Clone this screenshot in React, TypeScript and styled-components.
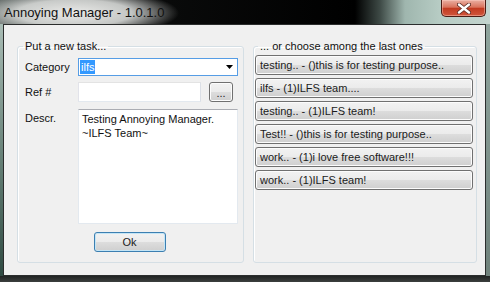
import styled, { createGlobalStyle } from "styled-components";

const GlobalStyle = createGlobalStyle`
  html, body {
    margin: 0;
    padding: 0;
    background: #111;
  }
  body {
    font-family: "Liberation Sans", Arial, sans-serif;
  }
`;

const Screen = styled.div`
  width: 490px;
  height: 282px;
  display: flex;
  flex-direction: column;
  overflow: hidden;
  background: #1c2120;
`;

const TitleBar = styled.div`
  height: 24px;
  flex: none;
  display: flex;
  justify-content: space-between;
  align-items: flex-start;
  background: radial-gradient(
      ellipse 105px 24px at 74px 13px,
      rgba(238, 238, 236, 0.98) 0%,
      rgba(220, 222, 220, 0.88) 55%,
      rgba(120, 124, 122, 0) 100%
    ),
    linear-gradient(
      90deg,
      #4a5350 0,
      #0a0b0b 150px,
      #000 355px,
      #3e4a46 380px,
      #9fb6ae 405px,
      #b7ccc4 440px,
      #c3d4ce 490px
    );
`;

const Title = styled.div`
  padding: 5px 0 0 4px;
  font-size: 13px;
  line-height: 15px;
  color: #111;
`;

const CloseButton = styled.div`
  width: 45px;
  height: 17px;
  margin-right: 4px;
  box-sizing: border-box;
  display: flex;
  align-items: center;
  justify-content: center;
  border: 1px solid #4b1c14;
  border-top: none;
  border-radius: 0 0 5px 5px;
  background: linear-gradient(#eab0a2 0%, #d9735c 45%, #c23b21 52%, #d0563c 100%);
  box-shadow: inset 0 0 0 1px rgba(255, 210, 200, 0.45);
`;

const FrameRow = styled.div`
  height: 252px;
  flex: none;
  display: flex;
`;

const LeftEdge = styled.div`
  width: 3px;
  background: linear-gradient(#a9bcb5, #5f7a70 60%, #2f4a42);
`;

const RightEdge = styled.div`
  width: 4px;
  background: linear-gradient(#8fa49d, #6f817b);
`;

const BottomEdge = styled.div`
  flex: 1;
  background: linear-gradient(#202322, #3b3f3e);
`;

const Client = styled.div`
  flex: 1;
  min-width: 0;
  box-sizing: border-box;
  display: flex;
  gap: 9px;
  padding: 14px 8px 12px 13px;
  background: #f0f0f0;
  border: 1px solid #2b2d2d;
`;

const GroupBox = styled.fieldset<{ $pad: string; $width?: number }>`
  flex: ${({ $width }) => ($width ? "none" : "1 1 0")};
  width: ${({ $width }) => ($width ? `${$width}px` : "auto")};
  box-sizing: border-box;
  min-width: 0;
  margin: 0;
  padding: ${({ $pad }) => $pad};
  border: 1px solid #d5dfe5;
  border-radius: 3px;
  box-shadow: inset 1px 1px 0 #fff;
  display: flex;
  flex-direction: column;
`;

const Caption = styled.legend<{ $indent: number }>`
  margin-left: ${({ $indent }) => $indent}px;
  padding: 0 2px;
  font-size: 11px;
  line-height: 14px;
  color: #111;
`;

const FormGrid = styled.div`
  margin-top: 5px;
  display: grid;
  grid-template-columns: 53px minmax(0, 1fr);
  row-gap: 6px;
`;

const FieldLabel = styled.div<{ $top?: boolean }>`
  font-size: 11px;
  line-height: 14px;
  color: #111;
  align-self: ${({ $top }) => ($top ? "start" : "center")};
  padding-top: ${({ $top }) => ($top ? "3px" : "0")};
`;

const Combo = styled.div`
  height: 18px;
  box-sizing: border-box;
  border: 1px solid #569de5;
  background: #fff;
  display: flex;
  align-items: center;
  justify-content: space-between;
  padding: 0 4px 0 1px;
`;

const Selected = styled.span`
  background: #3399ff;
  color: #fff;
  font-size: 11px;
  line-height: 14px;
  padding: 0 1px;
`;

const RefRow = styled.div`
  display: flex;
  gap: 8px;
  padding-right: 5px;
`;

const TextInput = styled.input`
  flex: 1;
  width: 100%;
  min-width: 0;
  height: 20px;
  box-sizing: border-box;
  margin: 0;
  border: 1px solid #abadb3;
  border-top-color: #e3e3e3;
  border-left-color: #e2e3ea;
  border-right-color: #dbdfe6;
  border-bottom-color: #e3e9ef;
  background: #fff;
`;

const Memo = styled.textarea`
  width: 100%;
  min-width: 0;
  margin: 1px 0 0;
  height: 115px;
  box-sizing: border-box;
  resize: none;
  overflow: hidden;
  border: 1px solid #e3e9ef;
  border-top-color: #abadb3;
  background: #fff;
  padding: 2px 3px;
  font-family: "Liberation Sans", Arial, sans-serif;
  font-size: 11px;
  line-height: 14px;
  color: #111;
`;

const Button = styled.button<{ $default?: boolean }>`
  margin: 0;
  height: 20px;
  box-sizing: border-box;
  border: 1px solid ${({ $default }) => ($default ? "#3c7fb1" : "#707070")};
  border-radius: 3px;
  background: linear-gradient(#f2f2f2 0%, #ebebeb 50%, #dddddd 50%, #cfcfcf 100%);
  box-shadow: inset 0 0 0 1px ${({ $default }) => ($default ? "#c4e5f6" : "#fcfcfc")};
  font-family: "Liberation Sans", Arial, sans-serif;
  font-size: 11px;
  line-height: 14px;
  color: #1b1b1b;
  padding: 0;
`;

const BrowseButton = styled(Button)`
  width: 24px;
  flex: none;
  padding-top: 2px;
`;

const OkRow = styled.div`
  margin-top: 8px;
  display: flex;
  justify-content: center;
  padding-right: 4px;
`;

const OkButton = styled(Button)`
  width: 72px;
`;

const TaskList = styled.div`
  display: flex;
  flex-direction: column;
  gap: 3px;
  margin-top: 2px;
`;

const TaskButton = styled(Button)`
  text-align: left;
  padding-left: 4px;
  white-space: nowrap;
  overflow: hidden;
`;

const recentTasks = [
  "testing.. - ()this is for testing purpose..",
  "ilfs - (1)ILFS team....",
  "testing.. - (1)ILFS team!",
  "Test!! - ()this is for testing purpose..",
  "work.. - (1)i love free software!!!",
  "work.. - (1)ILFS team!",
];

const App = () => {
  return (
    <>
      <GlobalStyle />
      <Screen>
        <TitleBar>
          <Title>Annoying Manager - 1.0.1.0</Title>
          <CloseButton>
            <svg width="14" height="11" viewBox="0 0 14 11">
              <path
                d="M2 1.5 L12 9.5 M12 1.5 L2 9.5"
                stroke="#5a2a22"
                strokeWidth="4"
                strokeLinecap="round"
              />
              <path
                d="M2 1.5 L12 9.5 M12 1.5 L2 9.5"
                stroke="#fff"
                strokeWidth="2.4"
                strokeLinecap="round"
              />
            </svg>
          </CloseButton>
        </TitleBar>
        <FrameRow>
          <LeftEdge />
          <Client>
            <GroupBox $pad="0 5px 0 7px" $width={227}>
              <Caption $indent={-2}>Put a new task...</Caption>
              <FormGrid>
                <FieldLabel>Category</FieldLabel>
                <Combo>
                  <Selected>ilfs</Selected>
                  <svg width="7" height="4" viewBox="0 0 7 4">
                    <path d="M0 0 H7 L3.5 4 Z" fill="#000" />
                  </svg>
                </Combo>
                <FieldLabel>Ref #</FieldLabel>
                <RefRow>
                  <TextInput readOnly value="" />
                  <BrowseButton>...</BrowseButton>
                </RefRow>
                <FieldLabel $top>Descr.</FieldLabel>
                <Memo readOnly value={"Testing Annoying Manager.\n~ILFS Team~"} />
              </FormGrid>
              <OkRow>
                <OkButton $default>Ok</OkButton>
              </OkRow>
            </GroupBox>
            <GroupBox $pad="0 3px 0 1px">
              <Caption $indent={3}>... or choose among the last ones</Caption>
              <TaskList>
                {recentTasks.map((task, i) => (
                  <TaskButton key={i}>{task}</TaskButton>
                ))}
              </TaskList>
            </GroupBox>
          </Client>
          <RightEdge />
        </FrameRow>
        <BottomEdge />
      </Screen>
    </>
  );
};

export default App;
